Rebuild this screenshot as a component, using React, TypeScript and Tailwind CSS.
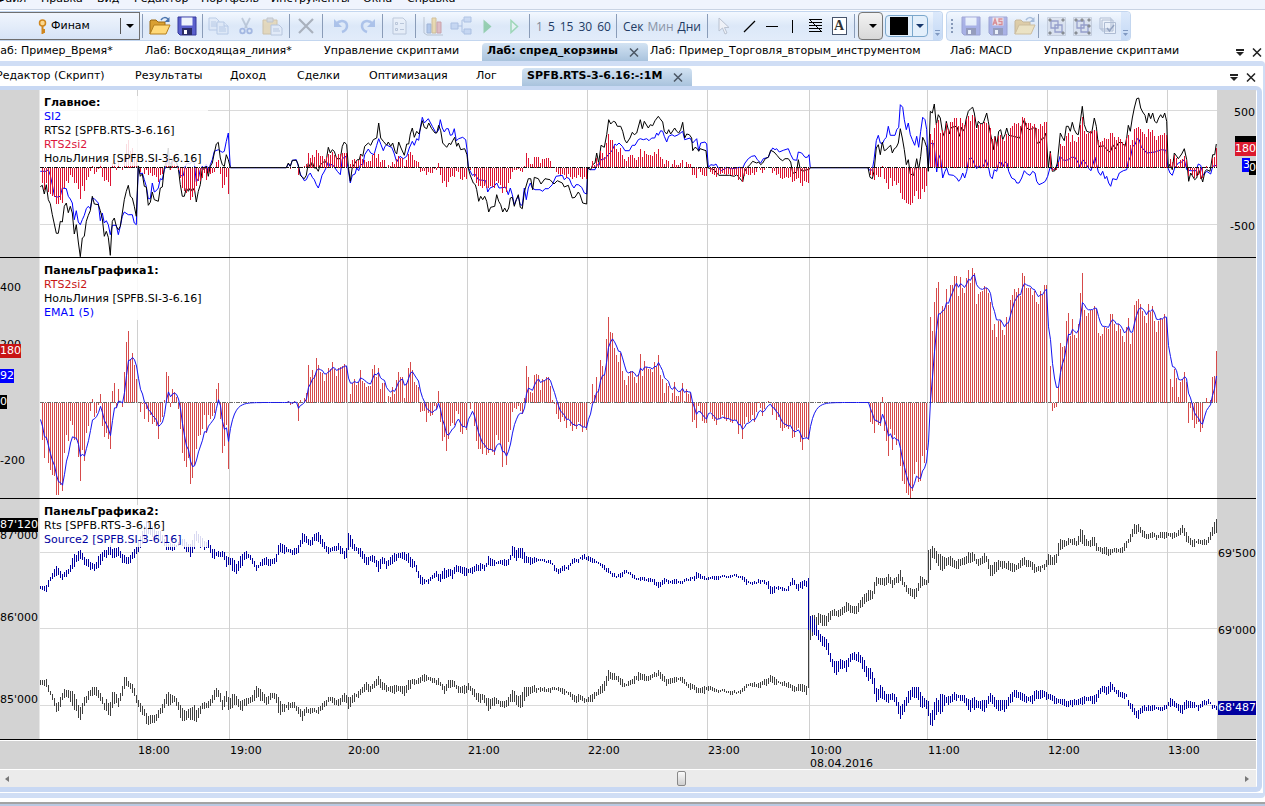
import { useState, type ReactNode } from "react";
import clsx from "clsx";

const FONT = "font-['DejaVu_Sans',Verdana,sans-serif]";

// ---------- series ----------

const STEP = 2;
const START_X = 42;

const zeros = (n: number) => Array<number>(n).fill(0);

// RTS2si2, one value per minute
const SPREAD: number[] = [
  -37, -55, -37, -60, -67, -72, -73, -92, -92, -82, -88, -50, -32, -38, -18, -22, -37, -37, -54, -78, -47, -58, -30, -23,
  -8, 4, -14, -10, -2, 9, -23, -34, -30, -36, -46, 12, 20, -5, 14, 1, -4, 31, 61, 72, 44, 50, 38, 24,
  0, -9, -1, -16, -6, -19, -12, -21, -19, -23, -36, -19, -14, 3, 31, 27, -4, 14, 11, 6, -6, -26, -50, -58, -64, -55, -81,
  -75, -62, -46, -33, -32, -26, -12, -30, -12, -16, -13, -10, 14, 20, -16, -50, -43, -22, -66,
  ...zeros(29),
  2, -2, -1, 2, 0, -18, 3, 0, 5, 10, 38, 26, 33, 28, 45, 38, 31, 30, 22, 29, 35, 34, 41, 34, 27, 35, 36, 37, 39, 37,
  0, 9, 20, 24, 18, 21, 33, 22, 20, 16, 17, 17, 34, 38, 26, 35, 14, 20, 20, 1, 7, 6, 16, 9, 23, 31, 26, 26, 5, 20, 35,
  41, 33, 21, 18, 16,
  -9, -8, -8, -19, -10, -13, -12, -3, -6, 12, -19, -38, -34, -48, -36, -23, -20, -22, -8, -11, -29, -31, -24, -27,
  0, -6, 0, -23, -38, -46, -46, -51, -45, -52, -50, -47, -49, -52, -32, -37, -42, -64, -50, -62, -39, -27, -9, -5, -6,
  -3, -8, -11, 5, 37, 26, 11, 10, 28, 29, 28, 13, 24, 23, 26, 26, 17, 3, -1, -11, -16, -19, -14, -18, -25, -16, -23,
  -28, -23, -26, -19, -23, -29, -24, -27,
  0, -1, 19, 8, 26, 14, 43, 37, 29, 64, 86, 71, 70, 55, 48, 41, 50, 32, 23, 18, 27, 32, 32, 26, 20, 29, 49, 27, 42, 36,
  34, 34, 31, 41, 36, 48, 28, 24, 10, 20, 17, 2, 10, 21, 7, 7, 12, 20, 2, 14, 9, 10, -19, -17, -25, -3, -10, -18, -20,
  -20, 0, -9, -16, -18, -22, -16, -15, -12, -16, -18, -16, -19, -20, -17, -18, -31, -22, -36, -21, -14, -19, -17, -12,
  -19, -9, 1, -5, -13, -6, 1, 2, 1, -12, -7, -17, -14, -25, -28, -25, -24, -26, -22, -35, -34, -27, -25, -39, -47, -34,
  -35, -37,
  ...zeros(30),
  -19, -21, -30, -19, -22, -23, 6, -28, -38, -53, -26, -47, -32, -42, -38, -63, -78, -81, -90, -92, -95, -88, -71, -59,
  -79, -78, -53, -60, -47,
  0, 86, 72, 101, 115, 121, 90, 97, 95, 114, 98, 118, 118, 127, 127, 107, 126, 115, 110, 125, 133, 120, 135, 130, 99,
  109, 111, 112, 117, 115, 110, 101, 73, 79, 66, 82, 83, 73, 68, 86, 81, 103, 108, 114, 111, 115, 107, 130, 127, 115,
  115, 115, 108, 112, 101, 99, 112, 108, 118, 118,
  0, 37, -8, -5, -4, 16, 60, 56, 57, 82, 90, 67, 84, 68, 65, 79, 110, 130, 93, 87, 90, 93, 93, 97, 94, 70, 67, 69, 76,
  75, 74, 89, 89, 79, 72, 79, 74, 67, 61, 76, 85, 59, 70, 98, 102, 104, 99, 92, 87, 80, 99, 91, 97, 82, 71, 82, 85, 84,
  89, 85,
  0, 24, 16, 34, 25, 6, 21, 24, 31, 21, -20, -5, -17, -25, -21, -19, -29, -25, 0, 5, 1, 3, 26, 27, 52,
];

// EMA(5)
const EMA: number[] = SPREAD.reduce<number[]>((acc, v) => {
  const prev = acc[acc.length - 1];
  acc.push(prev + (v - prev) / 3);
  return acc;
}, [-17]);

function barPath(base: number, scale: number) {
  return SPREAD.map((v, i) => {
    const h = Math.round(v * scale);
    return h === 0 ? "" : `M${START_X + i * STEP + 0.5} ${base}v${-h}`;
  }).join("");
}

const emaPoints = EMA.map((v, i) => `${START_X - STEP + i * STEP + 0.5},${(402.5 - v).toFixed(1)}`).join(" ");

// line segments are stored per chunk: [origin x, "x,y x,y ..."] in thirds of a pixel
type Chunk = [number, string];

const RTS2: Chunk[] = [
  [0, "121,296 127,292 133,318 139,290 145,335 151,347 157,380 163,408 169,436 175,436 181,400 187,402 193,355 199,345 205,374 211,355 217,375 223,438 229,410 235,462 241,506 247,450 253,445 259,400 265,382 271,368 277,325 283,348 295,350 301,368 307,392 313,445 319,430 325,448 331,502 337,400 343,390 349,415 355,425 361,415 367,375 373,335 379,310 385,292 391,325 397,330 403,355 409,385 415,232 421,265 427,258 433,295 439,297 445,352 451,343 457,312 463,335 475,340 481,300 487,297 493,240 499,220 505,180 511,245 517,215 529,222 535,240 541,290 547,325 553,325 559,300 565,310 571,300 577,310 583,300 589,342 595,310 601,290 607,240 613,245 619,235 625,265 631,235 637,225 643,195 649,168 655,163 661,210 667,230 673,235 679,200 685,215 691,239 859,239 865,225 871,235 877,217 889,217 895,230 901,262 907,268 913,272 919,262 925,225 931,238 937,222 943,240 949,240 955,250"],
  [320, "0,232 10,222 18,222 25,178 31,195 37,185 43,190 50,212 61,212 67,175 73,162 80,170 85,235 91,280 97,238 105,225 112,215 118,215 122,198 128,205 134,175 145,165 152,172 160,155 170,150 176,105 182,150 190,160 200,172 205,162 212,175 218,165 225,190 230,198 236,162 243,180 253,202 260,168 266,168 271,138 277,120 283,148 290,130 297,138 307,98 313,118 320,122 326,105 335,122 345,135 350,135 356,112 362,128 368,165 380,178 388,165 392,170 398,158 404,148 410,175 415,165 422,185 434,182 441,200 445,240 450,260 460,285 466,290 470,305 476,340 482,325 488,335 494,325 500,340 506,372 512,358 524,355 530,320 536,340 542,350 548,372 554,360 560,372 566,360 571,330 577,328 583,355 589,335 595,320 601,358 607,362 613,312 625,272 632,272 638,305 643,268 655,272 663,288 675,272 690,275 702,288 712,278 727,285 733,297 745,292 750,308 757,330 765,328 775,312 780,320 788,345 800,348 803,240 812,245 818,230 825,225 830,195 836,225 843,172 853,178 860,140 866,95 872,108 880,100 886,102 892,115 902,115 908,130 914,155 920,165 930,150 937,133 943,140 950,135"],
  [640, "1,95 7,122 13,100 25,120 31,110 38,113 45,98 55,85 60,92 68,102 73,130 80,138 86,125 92,138 104,120 110,130 116,135 122,125 128,103 134,150 140,138 148,140 155,150 158,188 165,178 172,182 176,190 180,182 198,188 203,239 212,242 222,245 230,255 237,262 268,262 283,265 290,260 297,268 305,278 308,282 314,250 320,240 330,230 338,220 350,225 356,222 362,230 368,225 376,212 385,208 392,187 402,192 412,203 420,213 428,218 435,212 445,212 452,222 458,255 465,255 470,250 475,215 480,240 487,250 500,245 507,245 511,239 684,239 690,268 697,272 702,250 709,180 715,170 721,200 727,162 733,188 739,185 745,178 752,172 757,195 763,182 769,178 775,165 781,122 787,150 793,185 799,230 805,215 811,258 821,262 830,212 836,245 842,205 848,148 854,160 860,178"],
  [920, "25,250 31,70 37,75 43,48 49,110 55,80 61,90 67,130 73,145 79,100 88,138 92,120 105,115 112,118 118,145 125,118 133,130 138,95 145,70 152,62 158,58 163,75 170,120 175,100 182,108 190,105 200,75 205,100 210,130 215,155 220,185 225,145 230,175 236,130 242,125 248,155 255,140 260,120 266,142 280,145 300,150 307,110 313,95 320,120 330,125 340,120 347,120 350,165 358,165 365,152 372,150 378,135 385,240 391,190 397,250 405,248 412,225 421,135 427,148 433,158 439,115 445,115 451,130 457,103 463,125 470,138 475,140 481,100 487,55 493,110 500,130 515,135 523,90 529,115 535,170 540,178 548,172 555,178 567,192 573,188 578,170 586,182 595,165 603,162 615,175 620,150 625,112 631,130 637,90 643,60 650,32 656,30 662,60 668,72 675,82 680,105 686,75 692,92 698,75 704,100 710,105 716,90 722,80 728,90 734,75 740,100 745,240 750,228 757,245 763,195 770,205 775,212 785,198 793,182 800,215 806,280 812,255 824,275 830,270 836,245 842,262 848,282 855,250 860,245 870,250 878,200 884,200 889,168"],
];

const SI2: Chunk[] = [
  [0, "121,250 139,250 145,245 151,262 157,290 163,322 169,328 181,325 187,300 199,302 205,325 211,333 217,345 223,395 229,368 235,402 241,410 247,395 253,382 259,362 265,355 271,362 277,330 283,332 295,345 301,398 307,375 313,405 319,398 325,410 331,440 337,412 349,412 355,440 361,415 367,385 373,372 385,380 397,380 403,405 409,410 415,238 421,258 427,255 433,275 439,295 445,332 451,332 457,285 463,312 469,308 475,300 481,272 487,275 493,245 499,235 505,215 511,228 517,220 529,222 535,240 541,263 550,263 556,235 562,225 570,228 576,220 583,225 589,282 595,272 601,245 607,235 613,242 619,228 625,255 631,230 637,215 643,190 655,185 667,193 673,190 679,160 685,135 691,239 859,239 865,228 871,235 877,217 889,215 895,235 901,258 907,268 913,278 919,275 925,262 931,255 937,268 943,275 949,290 955,300"],
  [320, "0,285 6,262 12,252 18,240 25,222 30,235 36,228 45,240 52,250 61,260 67,212 78,205 84,240 91,285 97,262 105,258 110,240 116,248 122,228 128,232 134,200 145,183 152,195 162,200 170,172 176,152 183,170 190,188 195,175 200,170 207,175 215,178 222,195 230,222 240,205 250,212 260,205 268,180 277,160 283,172 290,152 296,157 301,120 307,88 313,105 325,92 337,115 348,135 355,128 361,95 367,120 373,132 379,122 385,122 391,142 397,140 403,122 409,158 416,152 428,148 437,155 441,185 445,239 457,262 465,258 475,275 497,278 503,312 510,300 522,295 530,285 537,300 557,298 565,320 571,300 577,320 583,350 589,335 595,325 601,350 607,352 613,300 619,335 625,300 631,285 637,300 645,305 660,305 668,310 675,302 685,302 697,290 708,265 727,262 733,275 740,268 748,272 755,290 762,300 768,290 775,290 785,298 793,315 800,318 803,240 810,245 825,245 830,230 837,232 843,215 855,212 865,200 875,190 885,168 890,172 897,165 907,175 915,188 928,188 937,172 945,172 955,155"],
  [640, "1,152 10,155 20,152 27,158 35,150 44,150 50,135 55,142 62,128 68,130 73,145 80,162 86,145 96,140 104,145 115,140 128,130 134,155 150,150 158,165 170,152 176,188 182,165 195,162 200,168 205,239 212,230 222,232 228,228 235,240 245,248 260,238 275,242 290,240 297,238 308,240 315,225 325,212 335,205 345,203 352,215 362,225 370,212 385,208 392,190 398,180 405,185 410,182 418,192 430,187 445,182 452,200 460,215 470,217 475,192 485,195 495,208 502,208 507,200 511,239 684,239 690,248 697,245 702,215 709,158 715,142 721,165 727,168 733,155 739,148 745,115 751,142 765,142 770,125 776,118 781,50 788,58 793,95 799,125 805,105 811,140 817,155 824,172 830,145 836,178 842,130 848,88 855,95 860,125"],
  [920, "25,240 31,168 37,165 42,168 50,252 56,200 62,215 68,270 75,250 80,240 86,260 100,262 110,270 116,280 122,272 128,255 134,270 140,250 146,215 152,208 158,215 164,230 170,242 176,232 182,240 190,235 198,215 205,235 211,265 217,272 223,245 230,250 236,225 243,222 248,238 255,222 261,225 266,250 275,270 285,275 290,285 297,285 305,270 313,248 322,258 330,262 338,250 345,255 350,280 357,290 368,285 376,280 383,265 390,239 400,245 412,235 420,205 432,218 445,215 455,208 465,208 475,225 480,238 488,215 497,225 505,240 513,248 525,208 535,252 542,262 548,250 555,272 560,265 566,285 572,295 578,272 590,275 598,255 610,248 620,245 625,220 632,205 638,175 645,170 652,152 658,155 664,178 672,185 680,195 705,192 715,188 725,185 738,187 744,240 750,255 757,262 764,240 775,225 785,222 793,215 800,245 812,248 828,248 835,228 842,232 850,262 860,250 872,258 878,235 889,232"],
];

function linePoints(chunks: Chunk[]) {
  return chunks
    .flatMap(([ox, s]) =>
      s.split(" ").map((p) => {
        const [x, y] = p.split(",").map(Number);
        return `${(ox + x / 3).toFixed(1)},${(88 + y / 3).toFixed(1)}`;
      }),
    )
    .join(" ");
}

// high/low quotes: "x:high-low", interpolated to one bar per minute
const SI_QUOTES: Chunk[] = [
  [0, "101:263-272 111:264-280 116:262-281 121:243-262 131:222-242 141:200-232 146:212-232 155:230-248 166:214-233 175:200-222 181:171-208 190:170-190 195:154-190 200:155-178 207:175-200 217:180-205 224:193-218 234:197-218 244:170-207 254:160-185 263:155-180 270:135-168 278:155-183 290:143-170 302:170-195 312:178-197 322:170-195 332:152-178 341:125-160 350:100-140 362:65-110 380:90-120 395:100-130 409:135-157 420:135-155 430:140-155 445:120-140 455:125-155 469:140-178 479:103-150 484:98-120 492:112-150 503:130-155 512:126-150 522:152-180 535:160-178 550:160-180 556:175-208 562:178-200 573:180-222 580:200-228 592:170-208 605:160-182 615:170-186 625:190-208 631:205-222 643:185-203 655:178-200 665:185-206 675:180-197 680:165-190 685:132-162 695:140-165 705:148-163 718:155-172 733:140-165 743:104-135 752:115-135 762:125-145 775:105-130 782:101-132 795:130-152 807:148-168 820:145-160 832:135-157 845:160-182 851:150-178 855:104-155 862:115-145 870:140-160 885:150-178 899:178-202 915:170-190 929:190-222 938:175-198 948:190-212 960:175-200 970:162-188 985:163-183 1000:163-190 1010:180-208 1020:195-215 1031:230-258 1040:243-258 1052:242-258 1065:225-240 1072:218-235 1079:230-255 1090:210-243 1098:212-240 1103:213-232 1110:215-243 1120:200-222 1133:205-228 1145:210-234 1160:208-226 1170:198-218 1180:195-220 1190:203-218 1197:174-200 1207:182-205 1215:187-205 1230:185-200 1243:185-205 1253:170-185 1258:138-172 1265:158-192 1272:150-178 1280:147-180 1288:165-198 1300:178-200 1315:180-193 1333:182-193 1348:185-195 1360:200-218 1370:213-230 1380:204-218 1395:200-215 1405:182-195 1415:183-193 1430:168-185 1445:174-190 1460:184-196 1475:195-207 1490:208-222 1503:226-239 1515:229-238 1525:222-238"],
  [625, "5:216-226 15:222-232 25:232-243 37:238-249 50:238-248 62:238-250 75:245-262 85:255-270 93:247-262 100:237-255 110:247-258 125:243-257 140:250-262 150:240-250 163:238-248 173:235-248 178:216-240 190:233-243 205:238-246 225:233-245 245:231-238 265:230-238 275:228-238 290:234-245 300:245-262 315:252-262 328:243-254 345:247-258 353:250-272 359:268-294 365:265-286 375:262-275 390:270-280 402:265-278 410:240-262 418:246-262 424:260-282 432:250-270 447:248-268 451:240-395 457:355-392 463:355-410 470:380-412 477:402-432 487:415-445 495:422-455 501:440-475 508:483-500 516:490-530 521:490-532 530:482-510 540:490-510 545:485-525 555:465-488 565:462-485 575:463-495 585:482-518 597:510-550 605:512-540 613:543-590 618:575-615 628:560-600 638:580-605 648:590-615 658:583-605 668:600-628 673:620-660 678:625-665 685:610-645 695:580-615 706:567-595 716:567-600 722:568-610 727:590-635 738:605-625 745:610-655 751:655-690 757:625-680 763:597-655 768:610-640 775:585-650 785:590-620 795:595-620 810:582-606 825:592-608 835:592-618 845:605-640 858:598-635 870:610-632 884:605-645 896:585-612 908:600-630 920:605-640 932:605-642 945:590-615 958:573-600 970:582-605 985:595-615 1000:590-617 1008:575-605 1022:576-598 1033:582-605 1045:588-605 1060:600-620 1075:605-622 1098:605-628 1115:600-618 1128:592-618 1140:595-608 1150:592-622 1160:578-602 1172:562-582 1182:568-592 1191:550-582 1200:565-582 1210:575-596 1220:583-600 1230:588-598 1236:610-632 1245:618-642 1252:640-658 1260:635-662 1268:625-645 1285:622-637 1300:620-635 1315:628-640 1328:620-632 1338:598-626 1350:613-628 1367:620-648 1378:605-632 1395:612-628 1407:620-640 1420:606-622 1432:603-618 1440:622-632 1450:623-635"],
];

const RTS_QUOTES: Chunk[] = [
  [0, "101:545-560 111:545-565 117:540-570 121:568-585 131:592-610 141:617-648 150:595-625 160:570-598 170:575-600 180:578-628 190:607-640 195:625-668 200:628-665 208:598-625 218:580-605 228:567-595 240:568-595 250:590-610 257:615-635 264:600-640 270:625-665 277:580-628 285:585-610 292:600-628 300:570-600 307:532-570 313:540-560 322:556-575 328:560-590 337:595-620 347:618-647 356:635-655 362:650-690 370:650-678 380:652-675 390:635-660 400:618-645 410:585-615 415:582-625 425:593-613 435:600-625 445:625-668 452:638-670 462:632-660 470:630-668 479:620-668 484:640-672 490:625-650 500:613-635 512:610-630 522:590-615 530:567-595 540:578-605 547:610-640 556:577-610 563:605-648 570:588-630 580:592-620 592:610-638 605:600-625 618:595-615 631:562-598 640:575-610 655:598-622 665:582-605 678:588-610 685:600-655 695:620-640 710:612-635 722:612-628 735:628-650 743:640-670 752:628-645 765:630-645 780:630-650 795:610-630 807:595-612 820:600-620 835:600-622 847:582-610 856:598-635 865:590-615 880:578-598 892:563-585 900:550-575 910:565-583 920:545-568 929:532-562 940:555-580 950:562-582 965:565-587 975:560-582 992:565-595 1003:545-575 1015:542-560 1025:542-560 1035:530-550 1048:532-550 1062:540-555 1075:540-560 1090:565-590 1100:545-570 1110:545-568 1125:565-585 1140:562-587 1148:555-575 1160:570-592 1172:585-612 1187:590-612 1198:600-640 1207:600-625 1217:598-618 1228:608-627 1240:612-630 1248:595-622 1258:575-612 1268:592-622 1278:590-632 1288:562-605 1298:567-590 1310:562-582 1325:568-582 1345:570-582 1370:566-580 1385:572-590 1400:583-598 1407:592-613 1420:588-613 1435:600-614 1450:590-610 1460:580-602 1470:567-592 1482:550-580 1490:516-550 1500:523-545 1515:532-548 1525:540-565"],
  [625, "0:555-568 12:548-562 22:540-558 35:522-548 50:530-548 65:530-545 84:515-535 93:528-548 103:542-565 115:540-556 128:537-552 140:535-555 150:550-560 163:557-578 178:567-585 190:567-587 208:562-578 225:573-583 245:573-583 265:578-590 285:575-588 300:557-570 320:552-568 335:552-570 350:540-562 359:528-550 370:542-560 385:553-562 400:550-568 410:560-580 418:565-582 428:556-578 440:560-580 446:565-592 451:393-570 457:355-425 463:350-405 470:358-388 477:342-378 485:352-385 494:355-388 502:340-365 515:332-355 525:335-357 538:325-345 546:308-340 555:322-347 565:325-347 575:312-342 585:293-325 600:272-305 610:283-302 613:245-285 618:237-262 630:238-262 640:242-262 648:225-255 657:247-270 667:235-255 677:213-250 683:247-265 692:262-285 702:272-295 708:275-300 716:270-297 726:230-268 735:243-262 742:248-260 746:155-255 755:145-178 765:160-195 775:170-218 785:177-212 797:172-203 810:188-210 820:182-212 832:178-200 842:162-195 855:163-190 865:183-205 875:178-200 884:162-192 892:182-212 898:205-240 908:190-225 918:185-213 928:190-212 940:190-215 957:200-222 968:188-213 978:175-200 988:185-207 998:190-212 1005:200-226 1015:203-218 1028:200-217 1040:165-200 1050:178-200 1060:165-195 1065:120-165 1075:128-150 1088:120-140 1100:122-143 1110:125-145 1119:85-130 1128:115-147 1140:128-148 1150:113-140 1158:140-163 1170:150-166 1180:148-172 1192:153-172 1205:150-164 1220:147-166 1232:125-145 1240:107-130 1250:75-107 1260:78-103 1270:97-120 1280:108-125 1292:102-118 1303:112-126 1315:102-120 1330:103-120 1345:105-125 1355:98-115 1368:80-105 1378:105-135 1392:127-146 1405:122-138 1415:127-142 1430:120-138 1438:93-122 1450:63-105"],
];

const X_UNIT = 2.45;

function quotePath(chunks: Chunk[]) {
  const pts = chunks.flatMap(([ox, s]) =>
    s.split(" ").map((p) => {
      const [x, hl] = p.split(":");
      const [hi, lo] = hl.split("-").map(Number);
      return { x: ox + Number(x) / X_UNIT, hi: 498 + hi / 3, lo: 498 + lo / 3 };
    }),
  );
  let d = "";
  let k = 0;
  for (let x = 41; x <= 1217; x += STEP) {
    while (k < pts.length - 2 && pts[k + 1].x < x) k++;
    const a = pts[k];
    const b = pts[k + 1];
    const t = Math.min(1, Math.max(0, (x - a.x) / (b.x - a.x)));
    // ticks between two known quotes wobble a little
    const near = Math.min(t, 1 - t) * (b.x - a.x) < 1;
    const up = near ? 0 : (((x * 7) % 5) - 1) / 2;
    const down = near ? 0 : (((x * 11) % 7) - 4) / 2;
    // a gap belongs to a single bar
    const gap = Math.abs(b.lo - a.lo) > 30 || Math.abs(b.hi - a.hi) > 30;
    const f = gap ? Math.round(t) : t;
    const hi = Math.round(a.hi + (b.hi - a.hi) * f + up);
    const lo = Math.max(hi + 2, Math.round(a.lo + (b.lo - a.lo) * f + down));
    d += `M${x - 0.5} ${hi}V${lo}`;
  }
  return d;
}

// ---------- chart ----------

const PLOT_X = 40;
const PLOT_W = 1177;

const TIMES: { x: number; label: string; date?: string }[] = [
  { x: 137, label: "18:00" },
  { x: 229, label: "19:00" },
  { x: 347, label: "20:00" },
  { x: 467, label: "21:00" },
  { x: 587, label: "22:00" },
  { x: 707, label: "23:00" },
  { x: 809, label: "10:00", date: "08.04.2016" },
  { x: 927, label: "11:00" },
  { x: 1047, label: "12:00" },
  { x: 1167, label: "13:00" },
];

type AxisLabel = { y: number; text: string; className?: string };

function Axis({ side, labels = [] }: { side: "left" | "right"; labels?: AxisLabel[] }) {
  return (
    <div
      className={clsx(
        "relative shrink-0 overflow-hidden bg-[#d3d3d3]",
        side === "left" ? "w-10 border-r border-[#e8e8e8]" : "w-[39px]",
      )}
    >
      {labels.map((l) => (
        <span
          key={l.text + l.y}
          className={clsx(
            "absolute h-[14px] whitespace-nowrap leading-[14px]",
            side === "left" ? "left-0" : "right-0",
            l.className,
          )}
          style={{ top: l.y - 6 }}
        >
          {l.text}
        </span>
      ))}
    </div>
  );
}

type PanelProps = {
  title: string;
  top: number;
  height: number;
  className: string;
  rows?: number[];
  legend: { text: string; color: string }[];
  left?: AxisLabel[];
  right?: AxisLabel[];
  children: ReactNode;
};

function Panel({ title, top, height, className, rows = [], legend, left, right, children }: PanelProps) {
  return (
    <section className={clsx("flex border-b border-black", className)}>
      <Axis side="left" labels={left} />
      <div className="relative min-w-0 flex-1 bg-white">
        <svg
          className="block h-full w-full"
          viewBox={`${PLOT_X} ${top} ${PLOT_W} ${height}`}
          preserveAspectRatio="none"
          fill="none"
        >
          <g shapeRendering="crispEdges">
            {rows.map((y) => (
              <path key={y} d={`M${PLOT_X} ${y + 0.5}h${PLOT_W}`} stroke="#dadada" />
            ))}
            {TIMES.map((t) => (
              <path key={t.x} d={`M${t.x + 0.5} ${top}v${height}`} stroke="#d0d0d0" />
            ))}
          </g>
          {children}
        </svg>
        <div className="absolute left-0 top-[6px] min-w-[168px] bg-white/85 pl-1 leading-[14px]">
          <h2 className="font-bold">{title}</h2>
          {legend.map((l) => (
            <p key={l.text} className={clsx("whitespace-nowrap", l.color)}>
              {l.text}
            </p>
          ))}
        </div>
      </div>
      <Axis side="right" labels={right} />
    </section>
  );
}

function Chart() {
  return (
    <div>
      <Panel
        title="Главное:"
        top={90}
        height={167}
        className="h-[168px]"
        rows={[110, 224]}
        legend={[
          { text: "SI2", color: "text-[#0000ff]" },
          { text: "RTS2 [SPFB.RTS-3-6.16]", color: "text-black" },
          { text: "RTS2si2", color: "text-[#dc143c]" },
          { text: "НольЛиния [SPFB.SI-3-6.16]", color: "text-black" },
        ]}
        right={[
          { y: 22, text: "500", className: "pr-px" },
          { y: 136, text: "-500", className: "pr-px" },
          { y: 52, text: "", className: "w-[21px] bg-black" },
          { y: 58, text: "180", className: "bg-[#dc1a2e] text-white" },
          { y: 74, text: "3", className: "mr-[6px] bg-[#0000ff] pl-px text-white" },
          { y: 77, text: "0", className: "bg-black text-white" },
        ]}
      >
        <polyline points={linePoints(SI2)} stroke="#0000ff" />
        <polyline points={linePoints(RTS2)} stroke="#000" />
        <path d={barPath(168, 0.393)} stroke="#dc1432" shapeRendering="crispEdges" />
        <path d={`M${PLOT_X} 167.5h${PLOT_W}`} stroke="#111" strokeDasharray="4 1 1 1" shapeRendering="crispEdges" />
      </Panel>
      <Panel
        title="ПанельГрафика1:"
        top={258}
        height={240}
        className="h-[241px]"
        legend={[
          { text: "RTS2si2", color: "text-[#c81414]" },
          { text: "НольЛиния [SPFB.SI-3-6.16]", color: "text-black" },
          { text: "EMA1 (5)", color: "text-[#0000ff]" },
        ]}
        left={[
          { y: 29, text: "400" },
          { y: 86, text: "200" },
          { y: 202, text: "-200" },
          { y: 92, text: "180", className: "bg-[#c81414] text-white" },
          { y: 117, text: "92", className: "bg-[#0000ff] text-white" },
          { y: 143, text: "0", className: "bg-black text-white" },
        ]}
      >
        <path d={barPath(403, 1)} stroke="#d64a4a" shapeRendering="crispEdges" />
        <path d={`M${PLOT_X} 402.5h${PLOT_W}`} stroke="#6b6b6b" strokeDasharray="4 1 1 1" shapeRendering="crispEdges" />
        <polyline points={emaPoints} stroke="#1414f0" />
      </Panel>
      <Panel
        title="ПанельГрафика2:"
        top={499}
        height={240}
        className="h-[241px]"
        rows={[552, 628, 705]}
        legend={[
          { text: "Rts [SPFB.RTS-3-6.16]", color: "text-black" },
          { text: "Source2 [SPFB.SI-3-6.16]", color: "text-[#0000a0]" },
        ]}
        left={[
          { y: 36, text: "87'000" },
          { y: 25, text: "87'120", className: "bg-black text-white" },
          { y: 118, text: "86'000" },
          { y: 200, text: "85'000" },
        ]}
        right={[
          { y: 54, text: "69'500" },
          { y: 131, text: "69'000" },
          { y: 208, text: "68'487", className: "bg-[#0000a0] text-white" },
        ]}
      >
        <path d={quotePath(RTS_QUOTES)} stroke="#404040" shapeRendering="crispEdges" />
        <path d={quotePath(SI_QUOTES)} stroke="#0000a0" shapeRendering="crispEdges" />
      </Panel>
      <div className="mt-px flex h-7 bg-[#d3d3d3]">
        <div className="w-10 shrink-0" />
        <div className="relative flex-1">
          {TIMES.map((t) => (
            <div
              key={t.x}
              className="absolute top-[3px] pl-px leading-[14px]"
              style={{ left: `${((t.x - PLOT_X) / PLOT_W) * 100}%` }}
            >
              {t.label}
              {t.date && <div className="leading-[12px]">{t.date}</div>}
            </div>
          ))}
        </div>
        <div className="w-[39px] shrink-0" />
      </div>
    </div>
  );
}

// ---------- toolbar ----------

function Sep() {
  return <span className="h-6 w-px shrink-0 bg-[#8a9cb8]" />;
}

function Tool({ label, className, children }: { label: string; className?: string; children: ReactNode }) {
  return (
    <button aria-label={label} className={clsx("flex h-7 shrink-0 items-center justify-center", className ?? "w-[27px]")}>
      {children}
    </button>
  );
}

function FolderIcon() {
  return (
    <svg width="22" height="20" viewBox="0 0 22 20">
      <path d="M1 18V5l1-1h5l2 2h7v4H6z" fill="#d9a032" stroke="#9c6a14" />
      <path d="M1 18 5 9h16l-4 9z" fill="#ffd978" stroke="#b57f1d" />
      <path d="M12 4c2-3 5-3 7-1" fill="none" stroke="#4a74ad" strokeWidth="1.5" />
      <path d="M20.5 1v5h-5z" fill="#4a74ad" />
    </svg>
  );
}

function DiskIcon({ mark }: { mark?: boolean }) {
  return (
    <svg width="20" height="20" viewBox="0 0 20 20">
      <path d="M1 1h18v18H3l-2-2z" fill="#5a60cc" stroke="#34389c" />
      <path d="M4.5 1.5h11v8h-11z" fill={mark ? "#f6d5d5" : "#eef3fc"} />
      {mark && <path d="M5 9 7 3l2 6M6 7h2M14.500 3H11v2.500h3V8.500h-3.500" fill="none" stroke="#c00" strokeWidth="1.300" />}
      <path d="M5 12h10v7H5z" fill="#2a2c66" />
      <path d="M7 14h3v4H7z" fill="#fff" />
    </svg>
  );
}

function CopyIcon() {
  return (
    <svg width="21" height="18" viewBox="0 0 21 18" fill="#dce6f5" stroke="#7d9acb">
      <path d="M1 1h7l3 3v9H1z" />
      <path d="M3 5h5M3 7h6M3 9h6" />
      <path d="M9 5h7l4 4v8H9z" />
      <path d="M11 10h6M11 12h7M11 14h7M16 5v4h4" />
    </svg>
  );
}

function CutIcon() {
  return (
    <svg width="14" height="18" viewBox="0 0 14 18" fill="none" strokeWidth="1.8">
      <path d="M3 1l5 10M11 1 6 11" stroke="#8494ab" />
      <circle cx="3.5" cy="14" r="2.3" stroke="#4d6fc0" />
      <circle cx="10.5" cy="14" r="2.3" stroke="#4d6fc0" />
    </svg>
  );
}

function PasteIcon() {
  return (
    <svg width="22" height="19" viewBox="0 0 22 19">
      <path d="M1 3h14v14H1z" fill="#e8bd66" stroke="#b18638" />
      <path d="M5 1h6v4H5z" fill="#bbb" stroke="#888" />
      <path d="M9 8h8l3 3v7H9z" fill="#e6ecf7" stroke="#7f93b8" />
      <path d="M11 12h6M11 14h7" stroke="#7f93b8" />
    </svg>
  );
}

function UndoIcon({ flip }: { flip?: boolean }) {
  return (
    <svg width="16" height="16" viewBox="0 0 16 16" fill="none" className={flip ? "-scale-x-100" : undefined}>
      <path d="M3 6c5-5 11-3 11 2 0 3-2 5-5 6" stroke="#6f93d8" strokeWidth="2.5" />
      <path d="M1 1v8h8z" fill="#6f93d8" />
    </svg>
  );
}

function ListIcon() {
  return (
    <svg width="15" height="18" viewBox="0 0 15 18" fill="none" stroke="#8c9bb5">
      <path d="M1 1h10l3 3v13H1z" fill="#eef2f8" />
      <path d="M3.5 5.5h2v2h-2zM3.5 11.5h2v2h-2zM8 6.5h4M8 12.5h4" />
    </svg>
  );
}

function BarsIcon() {
  return (
    <svg width="21" height="20" viewBox="0 0 21 20">
      <path d="M1 1v16l3 2h16" fill="none" stroke="#8b95a5" />
      <path d="M4 8h4v9H4z" fill="#7ea2dd" stroke="#5575ae" />
      <path d="M9 2h4v15H9z" fill="#f0c45e" stroke="#b5862b" />
      <path d="M14 6h4v11h-4z" fill="#e08585" stroke="#b04f4f" />
    </svg>
  );
}

function FlowIcon() {
  return (
    <svg width="22" height="20" viewBox="0 0 22 20" stroke="#6f8fc8" fill="#a9c1ea">
      <path d="M8 10h4M12 4v12M12 4h3M12 16h3" fill="none" />
      <path d="M1 7h7v6H1zM14 1h7v5h-7zM14 13h7v5h-7z" />
    </svg>
  );
}

function ToolbarEnd() {
  return (
    <button
      aria-label="Параметры панели"
      className="flex h-7 w-[9px] shrink-0 flex-col items-center justify-end gap-[2px] rounded-r bg-linear-to-b from-[#dce9fb] to-[#c4d9f5] pb-1"
    >
      <span className="h-px w-[5px] bg-[#7f99c2]" />
      <svg width="5" height="3" viewBox="0 0 5 3">
        <path d="M0 0h5L2.500 3z" fill="#7f99c2" />
      </svg>
    </button>
  );
}

function Caret({ color = "#000" }: { color?: string }) {
  return (
    <svg width="8" height="4" viewBox="0 0 8 4">
      <path d="M0 0h8L4 4z" fill={color} />
    </svg>
  );
}

const BAR = "bg-linear-to-b from-[#f3f8ff] via-[#dce8f8] to-[#e2ecfa]";

function Toolbar() {
  return (
    <div className="flex h-8 items-center overflow-hidden bg-white">
      <div className={clsx("flex h-[30px] shrink-0 items-center rounded-r border border-l-0 border-[#c3d6ef]", BAR)}>
        <button className="flex h-7 w-[140px] shrink-0 items-center border border-l-0 border-[#6f6f6f] bg-linear-to-b from-[#f0f5fd] to-[#d7e4f6]">
          <span className="flex flex-1 items-center justify-center gap-1 pl-2 pt-px">
            <svg width="9" height="16" viewBox="0 0 9 16" fill="none">
              <circle cx="4.5" cy="4" r="3" fill="#fbd890" stroke="#d0871e" strokeWidth="1.5" />
              <path d="M4.5 7v8M5 11h2M5 13h2" stroke="#d0871e" strokeWidth="2" />
            </svg>
            Финам
          </span>
          <span className="flex h-4 w-[19px] items-center justify-center border-l border-[#555]">
            <Caret />
          </span>
        </button>
        <span className="w-[2px]" />
        <Sep />
        <Tool label="Открыть" className="ml-[3px] w-[27px]"><FolderIcon /></Tool>
        <Tool label="Сохранить"><DiskIcon /></Tool>
        <span className="w-[2px]" />
        <Sep />
        <div className="ml-[2px] flex opacity-40">
          <Tool label="Копировать"><CopyIcon /></Tool>
          <Tool label="Вырезать"><CutIcon /></Tool>
          <Tool label="Вставить"><PasteIcon /></Tool>
        </div>
        <span className="w-[3px]" />
        <Sep />
        <Tool label="Удалить" className="w-8">
          <svg width="16" height="16" viewBox="0 0 16 16">
            <path d="m1 1 14 14M15 1 1 15" stroke="#a9b1bd" strokeWidth="2.2" />
          </svg>
        </Tool>
        <Sep />
        <div className="ml-1 flex opacity-45">
          <Tool label="Отменить"><UndoIcon /></Tool>
          <Tool label="Повторить"><UndoIcon flip /></Tool>
        </div>
        <span className="w-px" />
        <Sep />
        <div className="flex opacity-45">
          <Tool label="Свойства" className="w-8"><ListIcon /></Tool>
        </div>
        <Sep />
        <div className="ml-1 flex opacity-45">
          <Tool label="График"><BarsIcon /></Tool>
          <Tool label="Схема"><FlowIcon /></Tool>
          <Tool label="Выполнить">
            <svg width="9" height="15" viewBox="0 0 9 15"><path d="M.5.5v14l8-7z" fill="#3fae5c" /></svg>
          </Tool>
          <Tool label="Запустить">
            <svg width="9" height="15" viewBox="0 0 9 15"><path d="M1 1.5v12l6.500-6z" fill="#eefaf0" stroke="#4fc06a" strokeWidth="1.5" /></svg>
          </Tool>
        </div>
        <span className="w-px" />
        <Sep />
        <div className="flex w-[86px] shrink-0 justify-between pl-[6px] pr-[5px] pt-px font-['Open_Sans',sans-serif] text-xs text-[#223a63]">
          {["1", "5", "15", "30", "60"].map((n, i) => (
            <button key={n} className={i === 0 ? "text-[#7d8898]" : undefined}>{n}</button>
          ))}
        </div>
        <Sep />
        <div className="flex w-[90px] shrink-0 justify-between px-[6px] pt-px font-['Open_Sans',sans-serif] text-xs text-[#223a63]">
          <button>Сек</button>
          <button className="text-[#8a94a5]">Мин</button>
          <button>Дни</button>
        </div>
        <Sep />
        <Tool label="Курсор" className="ml-[3px] w-[26px]">
          <svg width="13" height="18" viewBox="0 0 13 18"><path d="M1 1v13l3.500-3 2.500 6 2-1-2.500-5.500H11z" fill="#eef1f7" stroke="#b9c2d1" /></svg>
        </Tool>
        <Tool label="Линия" className="w-[25px]">
          <svg width="13" height="13" viewBox="0 0 13 13"><path d="M1 12 12 1" stroke="#000" strokeWidth="1.3" /></svg>
        </Tool>
        <Tool label="Горизонтальная линия" className="w-[19px]">
          <span className="h-px w-3 bg-black" />
        </Tool>
        <Tool label="Вертикальная линия" className="w-[22px]">
          <span className="h-[13px] w-px bg-black" />
        </Tool>
        <Tool label="Фибоначчи" className="w-6">
          <svg width="13" height="14" viewBox="0 0 13 14" stroke="#000" fill="none"><path d="M0 .5h13M0 3.500h13M0 6.500h13M0 9.500h13M0 12.500h13M1 1l11 11" /></svg>
        </Tool>
        <Tool label="Текст" className="w-6">
          <span className="flex h-[18px] w-[15px] items-center justify-center border border-[#46536b] bg-white font-['Liberation_Serif',serif] text-sm font-bold text-[#333]">A</span>
        </Tool>
        <span className="w-[3px]" />
        <Sep />
        <button aria-label="Стиль линии" className="ml-[3px] flex h-7 w-[25px] shrink-0 items-center justify-center rounded-sm border border-[#777] bg-linear-to-b from-[#f3f3f3] to-[#d8d8d8] pl-[5px]">
          <Caret />
        </button>
        <button aria-label="Цвет линии" className="ml-[2px] flex h-[22px] w-[43px] shrink-0 items-center rounded-sm border border-[#7ba7cc] bg-[#e3effb]">
          <span className="ml-1 size-[18px] shrink-0 bg-black" />
          <span className="ml-1 flex h-full flex-1 items-center justify-center border-l border-[#7ba7cc]">
            <Caret color="#16366b" />
          </span>
        </button>
        <span className="w-[5px]" />
        <ToolbarEnd />
      </div>
      <div className={clsx("ml-[3px] flex h-[30px] shrink-0 items-center rounded border border-[#c3d6ef]", BAR)}>
        <span className="ml-1 flex flex-col gap-[2px]">
          {[0, 1, 2, 3].map((i) => (
            <span key={i} className="size-[2px] bg-[#8699b8]" />
          ))}
        </span>
        <div className="ml-1 flex opacity-40">
          <Tool label="Сохранить шаблон"><DiskIcon /></Tool>
          <Tool label="Сохранить шаблон как"><DiskIcon mark /></Tool>
          <Tool label="Открыть шаблон"><FolderIcon /></Tool>
        </div>
        <Sep />
        <div className="ml-1 flex opacity-50">
          {[0, 1].map((i) => (
            <Tool key={i} label={i ? "Разгруппировать" : "Группировать"} className="w-[26px]">
              <svg width="19" height="19" viewBox="0 0 19 19" fill="none" stroke="#4d56a0">
                <path d="M.5.5h18v18H.5z" fill="#d4dae6" stroke="#aab3c5" />
                <path d="M4 4h7v7H4zM8 8h7v7H8z" strokeWidth="1.3" />
                <path d="M2 2h2v2H2zM15 2h2v2h-2zM2 15h2v2H2zM15 15h2v2h-2z" fill="#333" stroke="#333" />
                {i === 1 && <path d="M8 2h2v2H8zM15 8h2v2h-2z" fill="#333" stroke="#333" />}
              </svg>
            </Tool>
          ))}
          <Tool label="Выбрать все" className="w-[25px]">
            <svg width="18" height="18" viewBox="0 0 18 18" fill="#f5f7fb" stroke="#7e8fae">
              <path d="M1 1h11v11H1zM3 3h11v11H3zM5.5 5.5h11v11h-11z" />
              <path d="m8 11 2.500 3L15 8" fill="none" stroke="#4a5f8a" strokeWidth="1.5" />
            </svg>
          </Tool>
        </div>
        <span className="w-px" />
        <ToolbarEnd />
      </div>
    </div>
  );
}

// ---------- tabs ----------

type TabDef = { label: string; width: string };

const LAB_TABS: TabDef[] = [
  { label: "Лаб: Пример_Время*", width: "-ml-2 w-[153px]" },
  { label: "Лаб: Восходящая_линия*", width: "w-[179px]" },
  { label: "Управление скриптами", width: "w-[158px]" },
  { label: "Лаб: спред_корзины", width: "w-[166px]" },
  { label: "Лаб: Пример_Торговля_вторым_инструментом", width: "ml-[2px] w-[300px]" },
  { label: "Лаб: MACD", width: "w-[94px]" },
  { label: "Управление скриптами", width: "w-[140px]" },
];

const PAGE_TABS: TabDef[] = [
  { label: "Редактор (Скрипт)", width: "-ml-[4px] w-[139px]" },
  { label: "Результаты", width: "w-[95px]" },
  { label: "Доход", width: "w-[67px]" },
  { label: "Сделки", width: "w-[72px]" },
  { label: "Оптимизация", width: "w-[107px]" },
  { label: "Лог", width: "w-[46px]" },
  { label: "SPFB.RTS-3-6.16:-:1M", width: "w-[170px]" },
];

function Cross({ color }: { color: string }) {
  return (
    <svg width="10" height="9" viewBox="0 0 10 9">
      <path d="m1 .5 8 8M9 .5l-8 8" stroke={color} strokeWidth="1.5" />
    </svg>
  );
}

function TabStrip({ tabs, initial, className }: { tabs: TabDef[]; initial: number; className?: string }) {
  const [active, setActive] = useState(initial);
  return (
    <div className={clsx("flex h-5 items-end bg-white", className)}>
      <div role="tablist" className="flex min-w-0 flex-1 items-end overflow-hidden">
        {tabs.map((t, i) => (
          <button
            key={i}
            role="tab"
            aria-selected={i === active}
            onClick={() => setActive(i)}
            className={clsx(
              "flex h-[18px] shrink-0 items-center whitespace-nowrap pb-[2px]",
              t.width,
              i === active && "justify-between rounded-t-sm bg-linear-to-b from-[#d3e3f3] to-[#a9c3dd] pl-[5px] pr-[9px] font-bold",
            )}
          >
            {t.label}
            {i === active && (
              <span className="pt-[3px]">
                <Cross color="#4d5866" />
              </span>
            )}
          </button>
        ))}
      </div>
      <div className="flex items-center gap-2 pb-1">
        <button aria-label="Список вкладок" className="flex flex-col items-center gap-px">
          <span className="h-[2px] w-2 bg-[#222]" />
          <Caret color="#222" />
        </button>
        <button aria-label="Закрыть">
          <Cross color="#222" />
        </button>
      </div>
    </div>
  );
}

const MENU: { label: string; width: string }[] = [
  { label: "Файл", width: "w-[45px]" },
  { label: "Правка", width: "w-[56px]" },
  { label: "Вид", width: "w-[37px]" },
  { label: "Редактор", width: "w-[67px]" },
  { label: "Портфель", width: "w-[70px]" },
  { label: "Инструменты", width: "w-[92px]" },
  { label: "Окна", width: "w-[44px]" },
  { label: "Справка", width: "w-[60px]" },
];

function ScrollBar() {
  const [pos, setPos] = useState(546);
  return (
    <div className="mt-px flex h-[17px] items-center bg-[#ebebeb]">
      <button aria-label="Назад" className="flex w-[14px] shrink-0 justify-center">
        <svg width="4" height="6" viewBox="0 0 4 6"><path d="M4 0v6L0 3z" fill="#777" /></svg>
      </button>
      <input
        type="range"
        aria-label="Прокрутка графика"
        min={0}
        max={1000}
        value={pos}
        onChange={(e) => setPos(Number(e.target.value))}
        className="h-[15px] min-w-0 flex-1 appearance-none bg-transparent [&::-webkit-slider-thumb]:h-[15px] [&::-webkit-slider-thumb]:w-[9px] [&::-webkit-slider-thumb]:appearance-none [&::-webkit-slider-thumb]:rounded-[2px] [&::-webkit-slider-thumb]:border [&::-webkit-slider-thumb]:border-[#888] [&::-webkit-slider-thumb]:bg-linear-to-b [&::-webkit-slider-thumb]:from-[#fafafa] [&::-webkit-slider-thumb]:to-[#cfcfcf]"
      />
      <button aria-label="Вперёд" className="flex w-[18px] shrink-0 justify-center">
        <svg width="4" height="6" viewBox="0 0 4 6"><path d="M0 0v6l4-3z" fill="#777" /></svg>
      </button>
    </div>
  );
}

export default function App() {
  return (
    <div className={clsx("overflow-hidden bg-white text-[11px] text-black", FONT)}>
      <nav className="h-[9px] overflow-hidden bg-[#f0f4fd]">
        <div className="-mt-[8px] -ml-1 flex leading-[14px]">
          {MENU.map((m) => (
            <button key={m.label} className={clsx("shrink-0 text-left", m.width)}>
              {m.label}
            </button>
          ))}
        </div>
      </nav>
      <div className="border-t border-[#c9d3e3]">
        <Toolbar />
      </div>
      <TabStrip tabs={LAB_TABS} initial={3} className="-mt-px pr-[3px]" />
      <main className="rounded-r border-y-[5px] border-r-2 border-[#d0def5] pb-px pr-px">
        <TabStrip tabs={PAGE_TABS} initial={6} className="pr-[6px]" />
        <div className="rounded-r-md border-b-[5px] border-r-[5px] border-t-4 border-[#c8d8f3] pr-px">
          <Chart />
          <ScrollBar />
        </div>
      </main>
      <footer className="mt-1 h-[5px] border-t-2 border-[#a3a3a3] bg-[#b9c9e2]" />
    </div>
  );
}
